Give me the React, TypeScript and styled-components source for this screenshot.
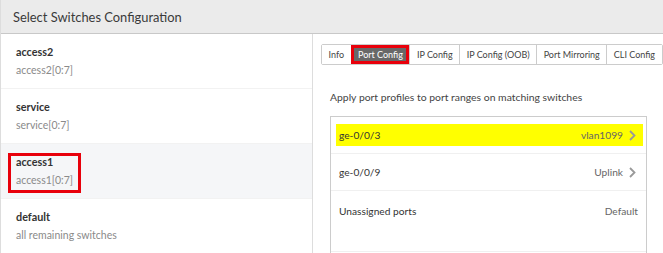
import React, { useState } from 'react';
import styled, { createGlobalStyle } from 'styled-components';

const GlobalStyle = createGlobalStyle`
  html, body {
    margin: 0;
    padding: 0;
    background: #fff;
  }
  body {
    font-family: Lato, 'Open Sans', 'Liberation Sans', sans-serif;
    color: #333;
    overflow: hidden;
  }
`;

// Styled Components
const Panel = styled.div`
  width: 663px;
  height: 253px;
  display: flex;
  flex-direction: column;
  border-left: 1px solid #ddd;
  box-sizing: border-box;
`;

const Header = styled.div`
  height: 34px;
  flex-shrink: 0;
  display: flex;
  align-items: center;
  padding-left: 12px;
  background-color: #ebebeb;
  border-bottom: 1px solid #c8c8c8;
  box-sizing: border-box;
  font-size: 12.9px;
  color: #3a3a3a;
`;

const Body = styled.div`
  flex: 1;
  display: flex;
  min-height: 0;
`;

const SwitchList = styled.ul`
  width: 311px;
  flex-shrink: 0;
  margin: 0;
  padding: 0;
  list-style-type: none;
  border-right: 1px solid #ddd;
`;

const SwitchItem = styled.li<{ $selected?: boolean }>`
  position: relative;
  height: 55px;
  padding: 11px 15px 0;
  box-sizing: border-box;
  border-bottom: 1px solid #f2f2f2;
  background-color: ${(p) => (p.$selected ? '#f5f6f8' : '#fff')};
`;

const SwitchName = styled.div`
  font-size: 10.8px;
  font-weight: 700;
  color: #333;
  line-height: 14px;
`;

const SwitchRange = styled.div`
  font-size: 10.5px;
  color: #8a8a8a;
  line-height: 14px;
  margin-top: 4px;
`;

const Callout = styled.div`
  position: absolute;
  left: 7px;
  top: 9px;
  width: 73px;
  height: 40px;
  border: 3px solid #e8000b;
  box-sizing: border-box;
`;

const Detail = styled.div`
  flex: 1;
  padding: 8px 6px 0 8px;
  min-width: 0;
`;

const Tabs = styled.div`
  display: inline-flex;
  border: 1px solid #ccc;
  border-radius: 2px;
  height: 21px;
  box-sizing: border-box;
`;

const Tab = styled.button<{ $active?: boolean }>`
  font-family: inherit;
  font-size: 9px;
  white-space: nowrap;
  padding: 0 6.5px;
  margin: 0;
  height: 100%;
  border: none;
  border-left: 1px solid ${(p) => (p.$active ? '#444' : '#ccc')};
  background: ${(p) => (p.$active ? '#686868' : '#fff')};
  color: ${(p) => (p.$active ? '#fff' : '#444')};
  cursor: pointer;
  box-sizing: border-box;
  outline: ${(p) => (p.$active ? '3px solid #e8000b' : 'none')};
  outline-offset: -3px;
  &:first-child {
    border-left: none;
  }
`;

const Intro = styled.p`
  margin: 25px 0 0 9px;
  font-size: 10.4px;
  color: #444;
  line-height: 14px;
`;

const PortTable = styled.div`
  margin: 12px 10px 0 9px;
  border: 1px solid #ccc;
  border-bottom: none;
  height: 140px;
`;

const PortRow = styled.div<{ $tall?: boolean }>`
  height: ${(p) => (p.$tall ? '61px' : '37px')};
  padding: ${(p) => (p.$tall ? '9px 3px 0 5px' : '0 3px 0 5px')};
  box-sizing: border-box;
  display: flex;
  align-items: ${(p) => (p.$tall ? 'flex-start' : 'center')};
  border-bottom: 1px solid #f0f0f0;
`;

const RowInner = styled.div<{ $highlight?: boolean }>`
  flex: 1;
  height: 22px;
  display: flex;
  align-items: center;
  justify-content: space-between;
  padding: 0 5px 0 3px;
  background: ${(p) => (p.$highlight ? '#ffff00' : 'transparent')};
  font-size: 10.2px;
`;

const PortName = styled.span`
  color: #333;
`;

const Profile = styled.span`
  display: flex;
  align-items: center;
  gap: 6px;
  color: #666;
`;

const Chevron = () => (
  <svg width="9" height="11" viewBox="0 0 9 11">
    <polyline points="1,1 5.5,5.5 1,10" fill="none" stroke="#999" strokeWidth="1.8" />
  </svg>
);

const switches = [
  { name: 'access2', range: 'access2[0:7]' },
  { name: 'service', range: 'service[0:7]' },
  { name: 'access1', range: 'access1[0:7]' },
  { name: 'default', range: 'all remaining switches' },
];

const tabs = ['Info', 'Port Config', 'IP Config', 'IP Config (OOB)', 'Port Mirroring', 'CLI Config'];

const ports = [
  { port: 'ge-0/0/3', profile: 'vlan1099', link: true, highlight: true },
  { port: 'ge-0/0/9', profile: 'Uplink', link: true },
  { port: 'Unassigned ports', profile: 'Default', link: false },
];

const App = () => {
  const [selected, setSelected] = useState('access1');
  const [tab, setTab] = useState('Port Config');

  return (
    <>
      <GlobalStyle />
      <Panel>
        <Header>Select Switches Configuration</Header>
        <Body>
          <SwitchList>
            {switches.map((s) => (
              <SwitchItem key={s.name} $selected={s.name === selected} onClick={() => setSelected(s.name)}>
                <SwitchName>{s.name}</SwitchName>
                <SwitchRange>{s.range}</SwitchRange>
                {s.name === 'access1' && <Callout />}
              </SwitchItem>
            ))}
          </SwitchList>
          <Detail>
            <Tabs>
              {tabs.map((t) => (
                <Tab key={t} $active={t === tab} onClick={() => setTab(t)}>
                  {t}
                </Tab>
              ))}
            </Tabs>
            <Intro>Apply port profiles to port ranges on matching switches</Intro>
            <PortTable>
              {ports.map((p) => (
                <PortRow key={p.port} $tall={!p.link}>
                  <RowInner $highlight={p.highlight}>
                    <PortName>{p.port}</PortName>
                    <Profile>
                      {p.profile}
                      {p.link && <Chevron />}
                    </Profile>
                  </RowInner>
                </PortRow>
              ))}
            </PortTable>
          </Detail>
        </Body>
      </Panel>
    </>
  );
};

export default App;
